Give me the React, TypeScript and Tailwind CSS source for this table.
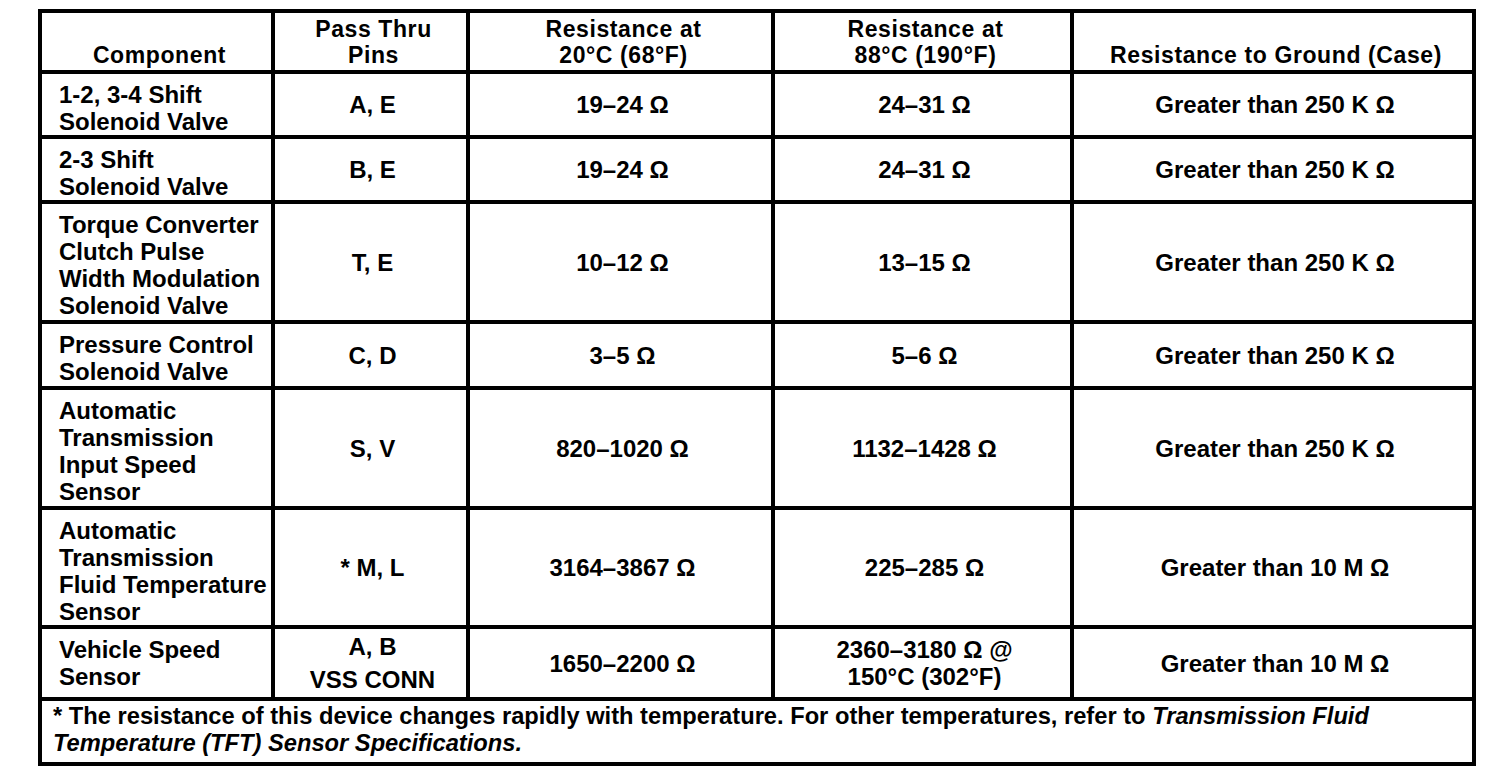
type Row = {
  component: string[];
  pins: string[];
  r20: string[];
  r88: string[];
  ground: string;
  pinsLeading?: boolean;
};

const rows: Row[] = [
  { component: ["1-2, 3-4 Shift", "Solenoid Valve"], pins: ["A, E"], r20: ["19–24 Ω"], r88: ["24–31 Ω"], ground: "Greater than 250 K Ω" },
  { component: ["2-3 Shift", "Solenoid Valve"], pins: ["B, E"], r20: ["19–24 Ω"], r88: ["24–31 Ω"], ground: "Greater than 250 K Ω" },
  {
    component: ["Torque Converter", "Clutch Pulse", "Width Modulation", "Solenoid Valve"],
    pins: ["T, E"],
    r20: ["10–12 Ω"],
    r88: ["13–15 Ω"],
    ground: "Greater than 250 K Ω",
  },
  { component: ["Pressure Control", "Solenoid Valve"], pins: ["C, D"], r20: ["3–5 Ω"], r88: ["5–6 Ω"], ground: "Greater than 250 K Ω" },
  {
    component: ["Automatic", "Transmission", "Input Speed", "Sensor"],
    pins: ["S, V"],
    r20: ["820–1020 Ω"],
    r88: ["1132–1428 Ω"],
    ground: "Greater than 250 K Ω",
  },
  {
    component: ["Automatic", "Transmission", "Fluid Temperature", "Sensor"],
    pins: ["* M, L"],
    r20: ["3164–3867 Ω"],
    r88: ["225–285 Ω"],
    ground: "Greater than 10 M Ω",
  },
  {
    component: ["Vehicle Speed", "Sensor"],
    pins: ["A, B", "VSS CONN"],
    r20: ["1650–2200 Ω"],
    r88: ["2360–3180 Ω @", "150°C (302°F)"],
    ground: "Greater than 10 M Ω",
    pinsLeading: true,
  },
];

function HeaderCell({ lines }: { lines: string[] }) {
  return (
    <div className="bg-white flex flex-col justify-end items-center pb-[2px] pl-[6px] text-[23px] tracking-[0.6px] leading-[26px] font-bold">
      {lines.map((l) => (
        <span key={l}>{l}</span>
      ))}
    </div>
  );
}

function CenterCell({ lines, wide }: { lines: string[]; wide?: boolean }) {
  return (
    <div
      className={
        "bg-white flex flex-col justify-center items-center pl-[4px] text-[24px] font-bold " +
        (wide ? "leading-[33px]" : "leading-[27px]")
      }
    >
      {lines.map((l) => (
        <span key={l}>{l}</span>
      ))}
    </div>
  );
}

export default function App() {
  return (
    <div className="min-h-screen bg-white text-black font-['Liberation_Sans',Arial,sans-serif] pl-[38px] pt-[9px]">
      <div className="grid w-fit bg-black gap-[4px] p-[4px] grid-cols-[229px_191px_301px_295px_398px] grid-rows-[57px_61px_61px_116px_62px_116px_115px_68px_61px]">
        <HeaderCell lines={["Component"]} />
        <HeaderCell lines={["Pass Thru", "Pins"]} />
        <HeaderCell lines={["Resistance at", "20°C (68°F)"]} />
        <HeaderCell lines={["Resistance at", "88°C (190°F)"]} />
        <HeaderCell lines={["Resistance to Ground (Case)"]} />

        {rows.map((r, i) => (
          <div key={i} className="contents">
            <div className="bg-white flex flex-col pl-[17px] pt-[7px] text-[24px] leading-[27px] font-bold">
              {r.component.map((c) => (
                <span key={c}>{c}</span>
              ))}
            </div>
            <CenterCell lines={r.pins} wide={r.pinsLeading} />
            <CenterCell lines={r.r20} />
            <CenterCell lines={r.r88} />
            <CenterCell lines={[r.ground]} />
          </div>
        ))}

        <div className="col-span-5 bg-white flex flex-col pl-[11px] pt-[2px] text-[23.7px] leading-[26.5px] font-bold">
          <p>
            * The resistance of this device changes rapidly with temperature. For other temperatures, refer to{" "}
            <em>Transmission Fluid</em>
          </p>
          <p>
            <em>Temperature (TFT) Sensor Specifications.</em>
          </p>
        </div>
      </div>
    </div>
  );
}
